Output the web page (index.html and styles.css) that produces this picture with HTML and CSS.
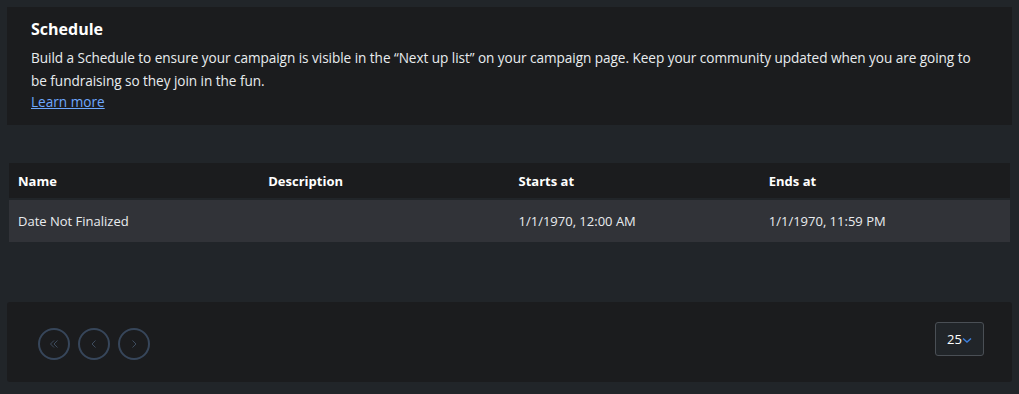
FILE: index.html
```html
<!DOCTYPE html>
<html lang="en">
<head>
    <meta charset="UTF-8">
    <meta name="viewport" content="width=device-width, initial-scale=1.0">
    <title>Schedule</title>
    <link rel="stylesheet" href="styles.css">
</head>
<body>
    <section class="intro-card">
        <h2>Schedule</h2>
        <p>Build a Schedule to ensure your campaign is visible in the “Next up list” on your campaign page. Keep your community updated when you are going to be fundraising so they join in the fun.</p>
        <a href="#" class="learn-link">Learn more</a>
    </section>

    <table class="schedule-table">
        <thead>
            <tr>
                <th>Name</th>
                <th>Description</th>
                <th>Starts at</th>
                <th>Ends at</th>
            </tr>
        </thead>
        <tbody>
            <tr>
                <td>Date Not Finalized</td>
                <td></td>
                <td>1/1/1970, 12:00 AM</td>
                <td>1/1/1970, 11:59 PM</td>
            </tr>
        </tbody>
    </table>

    <div class="pager-card">
        <div class="pager-buttons">
            <button type="button" class="pager-btn" aria-label="First page">
                <svg width="12" height="12" viewBox="0 0 12 12"><path d="M6 2.5 2.5 6 6 9.5M9.5 2.5 6 6l3.5 3.5" fill="none" stroke="currentColor" stroke-width="1"/></svg>
            </button>
            <button type="button" class="pager-btn" aria-label="Previous page">
                <svg width="12" height="12" viewBox="0 0 12 12"><path d="M7.5 2.5 4 6l3.5 3.5" fill="none" stroke="currentColor" stroke-width="1"/></svg>
            </button>
            <button type="button" class="pager-btn" aria-label="Next page">
                <svg width="12" height="12" viewBox="0 0 12 12"><path d="M4.5 2.5 8 6l-3.5 3.5" fill="none" stroke="currentColor" stroke-width="1"/></svg>
            </button>
        </div>
        <div class="page-size">
            <span>25</span>
            <svg width="10" height="8" viewBox="0 0 10 8"><path d="M1 2.5 5 6l4-3.5" fill="none" stroke="currentColor" stroke-width="1.5"/></svg>
        </div>
    </div>
</body>
</html>
```

FILE: styles.css
```css
body {
    font-family: "Open Sans", "Noto Sans", sans-serif;
    font-size: 13px;
    margin: 0;
    padding: 7px;
    background-color: #212529;
    color: #e9ecef;
}
.intro-card {
    background-color: #1b1c1e;
    padding: 12px 24px 14px 24px;
    height: 92px;
}
.intro-card h2 {
    margin: 0 0 7px 0;
    font-size: 16px;
    line-height: 20px;
    font-weight: 700;
    color: #ffffff;
}
.intro-card p {
    margin: 0;
    font-size: 13.6px;
    line-height: 23px;
    letter-spacing: -0.05px;
}
.learn-link {
    color: #6ea8fe;
    font-size: 13.6px;
    line-height: 20px;
}
.schedule-table {
    width: calc(100% - 4px);
    margin: 36px 2px 0 2px;
    border-collapse: separate;
    border-spacing: 0 2px;
    table-layout: fixed;
}
.schedule-table th {
    text-align: left;
    background-color: #1b1c1e;
    color: #ffffff;
    font-weight: 700;
    height: 35px;
    padding: 0 9px;
}
.schedule-table td {
    background-color: #313338;
    height: 42px;
    padding: 0 9px;
}
.pager-card {
    margin-top: 58px;
    background-color: #1b1c1e;
    border-radius: 3px;
    height: 80px;
    padding: 0 28px 0 31px;
    display: flex;
    align-items: center;
    justify-content: space-between;
    box-sizing: border-box;
}
.pager-buttons {
    display: flex;
    gap: 8px;
    margin-top: 3px;
}
.pager-btn {
    width: 32px;
    height: 32px;
    border-radius: 50%;
    border: 2px solid #37465a;
    background: none;
    color: #3e4c5e;
    padding: 0;
    display: flex;
    align-items: center;
    justify-content: center;
}
.page-size {
    width: 49px;
    height: 34px;
    box-sizing: border-box;
    border: 1px solid #4a4f55;
    border-radius: 3px;
    background-color: #212529;
    display: flex;
    align-items: center;
    justify-content: center;
    color: #ffffff;
    font-size: 13px;
    margin-top: -6px;
}
.page-size svg {
    color: #3d7fdc;
    margin-top: 2px;
}
```
